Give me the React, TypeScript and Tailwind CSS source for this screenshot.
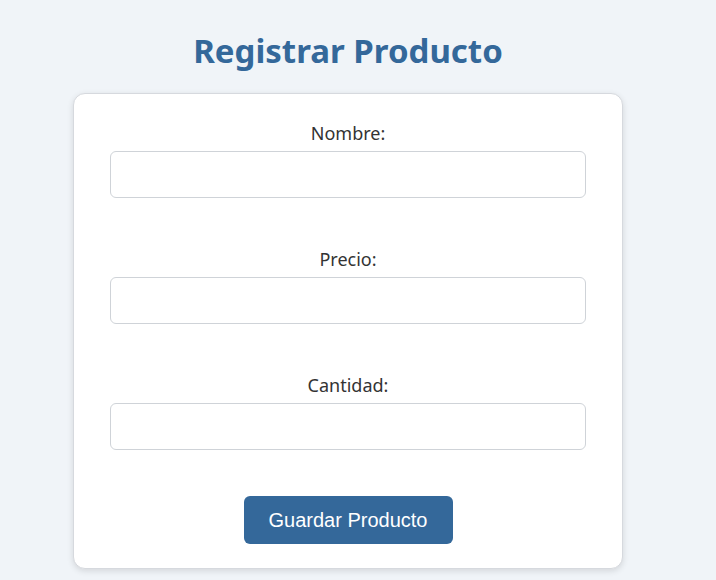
export default function App() {
  const fields = ['Nombre:', 'Precio:', 'Cantidad:']

  return (
    <div className="min-h-screen bg-[#f0f4f8] pl-[73px] pr-[93px] pt-[31px] font-['Noto_Sans',sans-serif]">
      <h1 className="text-center text-[33px] font-bold leading-[40px] text-[#34689a]">Registrar Producto</h1>

      <form className="mt-[22px] rounded-xl border border-[#d6d9de] bg-white px-[36px] pt-[26px] pb-[24px] shadow-[0_2px_6px_rgba(0,0,0,0.12)]">
        {fields.map((label, i) => (
          <div key={label} className={i < fields.length - 1 ? 'mb-[48px]' : 'mb-[46px]'}>
            <label className="mb-[5px] block text-center text-[18px] leading-[26px] text-[#333]">{label}</label>
            <input type="text" className="block h-[47px] w-full rounded-md border border-[#cfd3d8] bg-white px-3 outline-none" />
          </div>
        ))}
        <div className="flex justify-center">
          <button
            type="button"
            className="h-[48px] w-[209px] rounded-md bg-[#34689a] font-['Liberation_Sans',Arial,sans-serif] text-[20px] text-white"
          >
            Guardar Producto
          </button>
        </div>
      </form>
    </div>
  )
}
